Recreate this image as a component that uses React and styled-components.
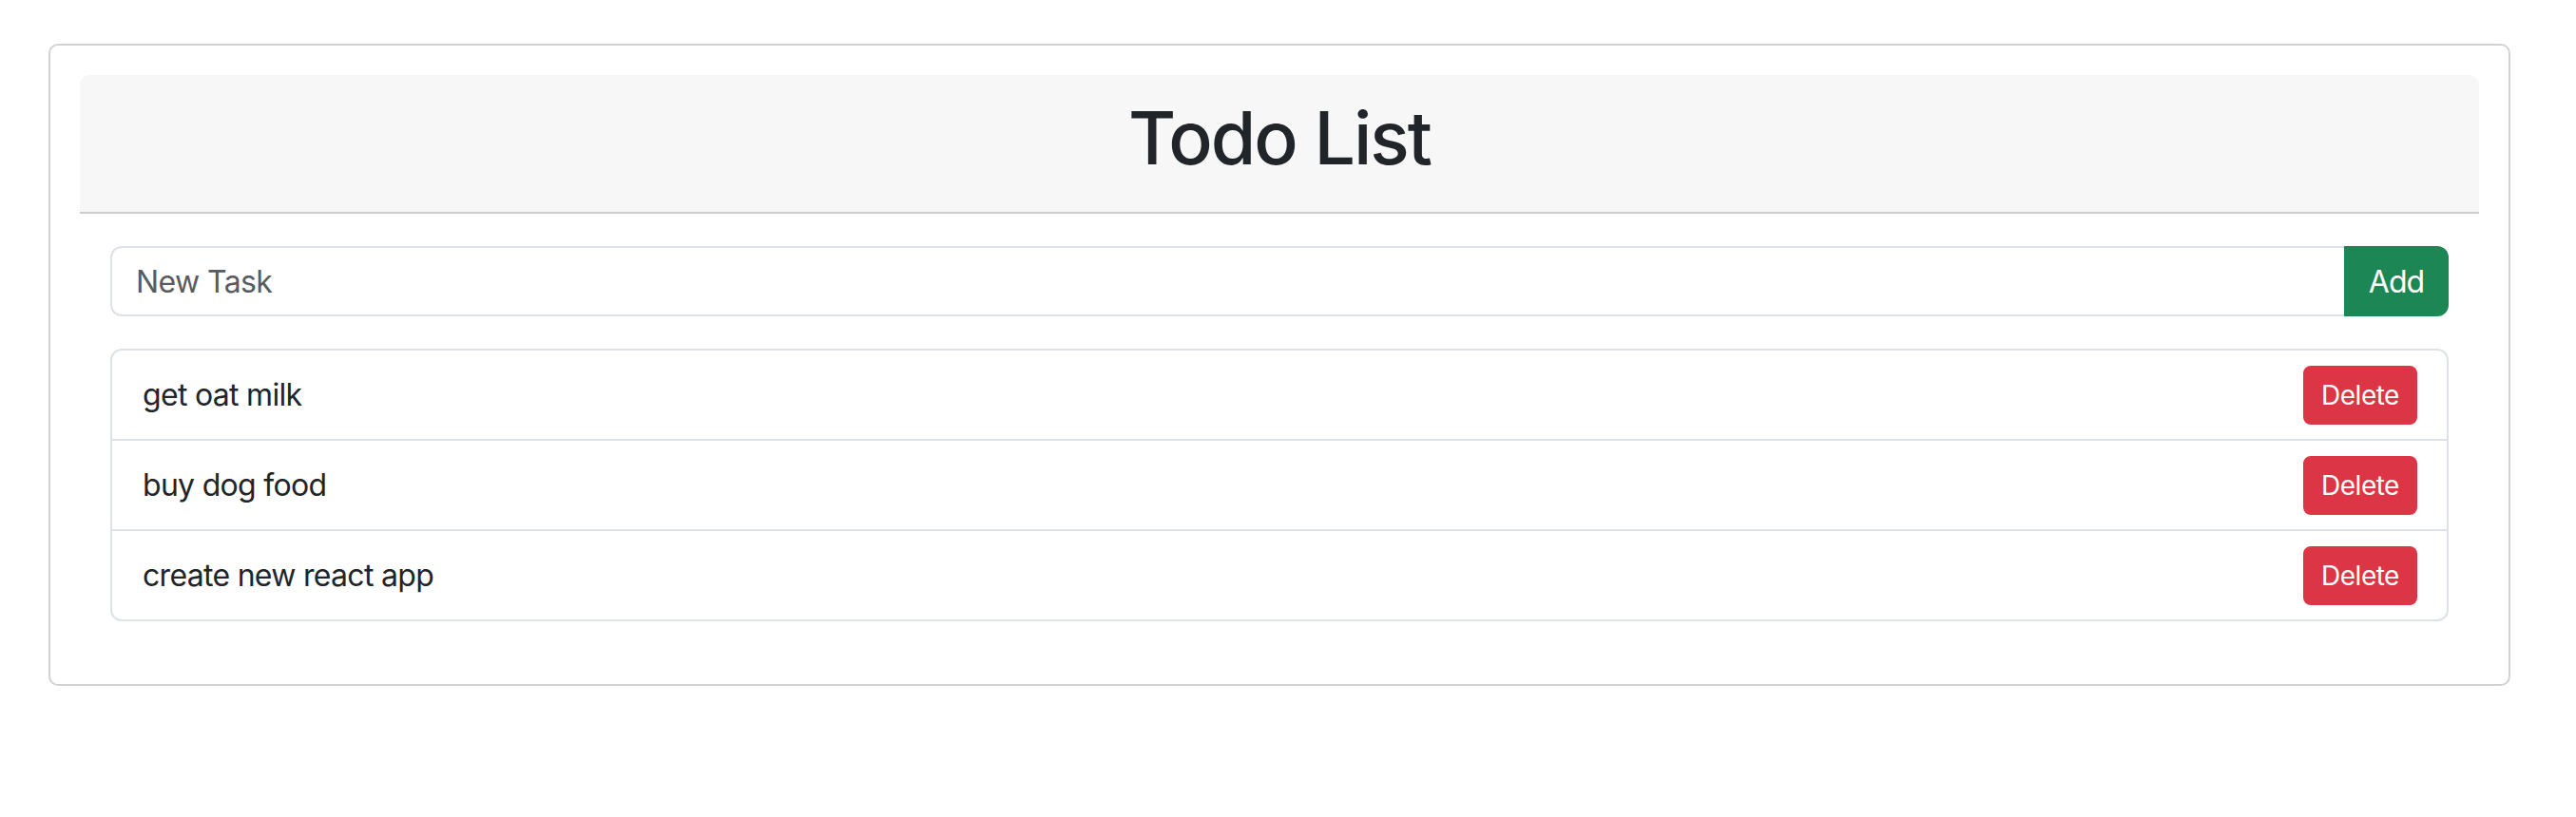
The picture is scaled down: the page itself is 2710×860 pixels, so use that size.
import React from "react";
import styled, { createGlobalStyle } from "styled-components";

const Global = createGlobalStyle`
  html, body { margin: 0; padding: 0; background: #ffffff; }
  body { font-family: Inter, "Noto Sans", "Liberation Sans", sans-serif; color: #212529; }
  * { box-sizing: border-box; }
`;

const Page = styled.div`
  padding: 46px 69px 0 51px;
`;

const Card = styled.div`
  border: 2px solid #d2d2d2;
  border-radius: 10px;
  padding: 31px;
  background: #fff;
`;

const Header = styled.div`
  background: #f7f7f7;
  border-bottom: 2px solid #cccccc;
  border-radius: 10px 10px 0 0;
  height: 146px;
  padding-bottom: 11px;
  display: flex;
  align-items: center;
  justify-content: center;
`;

const Title = styled.h1`
  margin: 0;
  font-size: 77px;
  font-weight: 500;
  line-height: 1.2;
  color: #212529;
  letter-spacing: -2px;
`;

const Body = styled.div`
  padding: 34px 32px 35px 32px;
  display: flex;
  flex-direction: column;
  gap: 34px;
`;

const InputGroup = styled.form`
  display: flex;
  height: 74px;
`;

const TaskInput = styled.input`
  flex: 1;
  min-width: 0;
  border: 2px solid #dee2e6;
  border-right: none;
  border-radius: 12px 0 0 12px;
  padding: 0 25px;
  font-family: inherit;
  font-size: 32px;
  letter-spacing: -0.6px;
  color: #212529;
  outline: none;
  &::placeholder { color: #595c5f; }
`;

const AddButton = styled.button`
  width: 110px;
  border: none;
  border-radius: 0 12px 12px 0;
  background: #1c8755;
  color: #fff;
  font-family: inherit;
  font-size: 32px;
  letter-spacing: -1px;
  cursor: pointer;
`;

const List = styled.ul`
  list-style: none;
  margin: 0;
  padding: 0;
  border: 2px solid #dee2e6;
  border-radius: 12px;
`;

const Item = styled.li`
  height: ${(p) => (p.$last ? 93 : 95)}px;
  display: flex;
  align-items: center;
  justify-content: space-between;
  padding: 0 31px 0 32px;
  border-bottom: ${(p) => (p.$last ? "none" : "2px solid #dee2e6")};
  font-size: 32px;
  letter-spacing: -0.7px;
  color: #212529;
`;

const DeleteButton = styled.button`
  width: 120px;
  height: 62px;
  border: none;
  border-radius: 8px;
  background: #dc3545;
  color: #fff;
  font-family: inherit;
  font-size: 28px;
  letter-spacing: -0.5px;
  cursor: pointer;
`;

const tasks = ["get oat milk", "buy dog food", "create new react app"];

export default function App() {
  return (
    <>
      <Global />
      <Page>
        <Card>
          <Header>
            <Title>Todo List</Title>
          </Header>
          <Body>
            <InputGroup onSubmit={(e) => e.preventDefault()}>
              <TaskInput placeholder="New Task" />
              <AddButton type="submit">Add</AddButton>
            </InputGroup>
            <List>
              {tasks.map((t, i) => (
                <Item key={t} $last={i === tasks.length - 1}>
                  <span>{t}</span>
                  <DeleteButton>Delete</DeleteButton>
                </Item>
              ))}
            </List>
          </Body>
        </Card>
      </Page>
    </>
  );
}
